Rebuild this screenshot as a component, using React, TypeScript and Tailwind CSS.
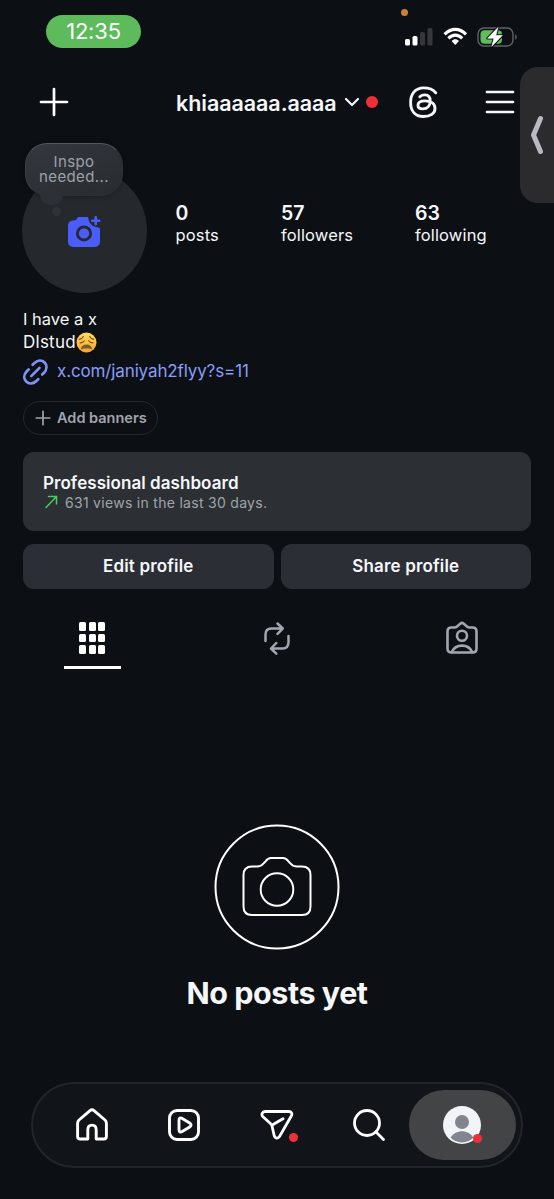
import { ReactNode } from "react";

interface StatProps {
  value: string;
  label: string;
  className?: string;
}

const Stat = (props: StatProps) => {
  return (
    <div className={props.className}>
      <div className="text-[19.5px] leading-[22px] font-semibold">{props.value}</div>
      <div className="text-[16.5px] leading-[22px] tracking-[0.15px]">{props.label}</div>
    </div>
  );
};

const ThreadsIcon = () => (
  <svg width="34" height="36" viewBox="0 0 34 36" fill="none" stroke="#f5f7fa" strokeWidth="2.9" strokeLinecap="round" strokeLinejoin="round">
    <path d="M29.8 8.8C27 5.3 22.5 3.9 17.6 3.9C9.4 3.9 4.6 9.8 4.6 18.3C4.6 27.2 9.4 32.5 17.3 32.5C24.6 32.5 29 29.3 29 24.5C29 19.4 24.3 16.9 19 16.9C14.4 16.9 12 18.7 12 21.2C12 23.4 13.9 24.9 16.7 24.9C21.3 24.9 24.2 21.7 24.2 17C24.2 13 22.3 10.9 18.9 10.9C16.7 10.9 15 11.6 13.8 12.8" />
  </svg>
);

const StatusIcons = () => (
  <svg width="114" height="24" viewBox="0 0 114 24" fill="none">
    <rect x="1" y="14" width="5" height="6.5" rx="1.6" fill="#fff" />
    <rect x="8.5" y="11" width="5" height="9.5" rx="1.6" fill="#fff" />
    <rect x="16" y="7" width="5" height="13.5" rx="1.6" fill="#34363b" />
    <rect x="23.5" y="3" width="5" height="17.5" rx="1.6" fill="#34363b" />
    <g stroke="#fff" strokeWidth="3.1">
      <path d="M40.6 9.4C47.2 2.7 55.4 2.7 62 9.4" />
      <path d="M44.4 13.3C48.6 9.1 54 9.1 58.2 13.3" />
    </g>
    <path d="M47.6 15.9C49.9 13.8 52.7 13.8 55 15.9L51.3 20Z" fill="#fff" />
    <rect x="74" y="3" width="35" height="18" rx="6" stroke="#5f6267" strokeWidth="1.4" />
    <path d="M111.2 9.3C113.2 10 113.2 14 111.2 14.7Z" fill="#5f6267" />
    <rect x="76.5" y="5.3" width="21.5" height="13.4" rx="4" fill="#5dbe5b" />
    <path d="M94 2.5L83.6 13.3H90L87.8 21.3L98.2 10.5H91.8Z" fill="#fff" stroke="#0c1014" strokeWidth="2.6" strokeLinejoin="round" />
    <path d="M94 2.5L83.6 13.3H90L87.8 21.3L98.2 10.5H91.8Z" fill="#fff" stroke="#fff" strokeWidth="0.6" strokeLinejoin="round" />
  </svg>
);

const WearyFace = () => (
  <svg width="21" height="21" viewBox="0 0 21 21" role="img" aria-label="weary face">
    <defs>
      <linearGradient id="face" x1="0" y1="0" x2="0" y2="1">
        <stop offset="0" stopColor="#ffdc62" />
        <stop offset="1" stopColor="#f3a52f" />
      </linearGradient>
    </defs>
    <circle cx="10.5" cy="10.5" r="10" fill="url(#face)" />
    <g fill="none" stroke="#7a4a12" strokeWidth="1.1" strokeLinecap="round">
      <path d="M3.3 7.4C5.2 7 6.6 5.9 7.3 4.4" />
      <path d="M17.7 7.4C15.8 7 14.4 5.9 13.7 4.4" />
      <path d="M4 10.8C5.8 11 7.3 10.3 8.3 8.8" />
      <path d="M17 10.8C15.2 11 13.7 10.3 12.7 8.8" />
    </g>
    <path d="M4.8 17.4C5.2 13.9 7.4 12.4 10.5 12.4S15.8 13.9 16.2 17.4C14.5 16.2 6.5 16.2 4.8 17.4Z" fill="#7d5a30" />
  </svg>
);

const CameraPlus = () => (
  <svg width="33" height="32" viewBox="0 0 33 32">
    <path
      fill="#4a5df9"
      fillRule="evenodd"
      d="M11.5 1H19.2C19.8 1 20.2 1.4 20.3 2C20.8 7.3 24.6 11 30.3 11.4C31.5 11.5 32 12 32 13V25.6C32 29 30 31 26.6 31H5.4C2 31 0 29 0 25.6V10C0 6.6 2 4.7 5.4 4.6C7.5 4.5 8.2 4 9 2.5C9.6 1.4 10.2 1 11.5 1ZM16 9.4A8 8 0 1 0 16 25.4A8 8 0 1 0 16 9.4Z"
    />
    <circle cx="16" cy="17.4" r="5.2" fill="#4a5df9" />
    <path d="M27.7 1.2V8.2M24.2 4.7H31.2" stroke="#4a5df9" strokeWidth="2.6" strokeLinecap="round" />
  </svg>
);

const NavItem = ({ children }: { children: ReactNode }) => (
  <div className="relative flex w-[92.5px] items-center justify-center">{children}</div>
);

const App = () => {
  return (
    <div className="relative flex h-[1199px] w-[554px] flex-col overflow-hidden bg-[#0c1014] font-['Inter',sans-serif] text-[#f5f7fa]">
      {/* status bar */}
      <div className="flex h-16 justify-between pt-[15px] pr-[36px] pl-[46px]">
        <div className="flex h-[33px] w-[95px] items-center justify-center rounded-full bg-[#5dbb5b] text-[22px] tracking-[-0.2px] text-white">
          12:35
        </div>
        <div className="pt-[10px]">
          <StatusIcons />
        </div>
      </div>
      <div className="absolute top-[9px] left-[401px] size-[7px] rounded-full bg-[#c98038]" />

      {/* header */}
      <div className="flex h-[76px] items-center pl-[39px]">
        <svg width="30" height="30" viewBox="0 0 30 30" stroke="#fff" strokeWidth="2.7" strokeLinecap="round">
          <path d="M15 2V28M2 15H28" />
        </svg>
        <div className="ml-[107px] w-[162px] pt-[2px] text-[21.5px] font-semibold tracking-[-0.05px] whitespace-nowrap">khiaaaaaa.aaaa</div>
        <svg className="ml-[6px]" width="16" height="10" viewBox="0 0 16 10" fill="none" stroke="#f5f7fa" strokeWidth="2.2" strokeLinecap="round" strokeLinejoin="round">
          <path d="M2 2L8 8L14 2" />
        </svg>
        <div className="ml-[6px] size-3 rounded-full bg-[#f03038]" />
        <div className="ml-[28px]">
          <ThreadsIcon />
        </div>
        <svg className="ml-[45px]" width="30" height="26" viewBox="0 0 30 26" stroke="#f5f7fa" strokeWidth="2.7" strokeLinecap="round">
          <path d="M2 3H28M2 13H28M2 23H28" />
        </svg>
      </div>

      {/* side handle */}
      <div className="absolute top-[67px] left-[520px] flex h-[136px] w-[40px] items-center rounded-l-[18px] bg-[#2b2b2d] pl-[9px]">
        <svg width="16" height="40" viewBox="0 0 16 40" fill="none" stroke="#b8b9c1" strokeWidth="5" strokeLinecap="round" strokeLinejoin="round">
          <path d="M11.5 3.5L4.5 20L11.5 36.5" />
        </svg>
      </div>

      {/* avatar and stats */}
      <div className="flex h-[154px] pt-[28px] pl-[22px]">
        <div className="relative flex size-[125px] items-center justify-center rounded-full bg-[#25282c]">
          <div className="pt-[2px]">
            <CameraPlus />
          </div>
          <div className="absolute top-[39px] left-[30px] size-[9px] rounded-full bg-[#2f3237]" />
          <div className="absolute top-[-25px] left-[3px] flex h-[53px] w-[98px] flex-col items-center justify-center rounded-[22px] border border-[#2c3036] border-t-[#55595e] border-l-[#3c4045] bg-linear-to-br from-[#34373d] to-[#282c31] pb-px text-[15px] leading-[15px] tracking-[0.4px] text-[#9da1a9] shadow-[0_1px_5px_rgba(0,0,0,0.25)]">
            <span>Inspo</span>
            <span>needed...</span>
          </div>
          {/* bubble tail */}
          <div className="absolute top-[27px] left-[18px] h-[10px] w-[23px] rounded-b-[11px] bg-[#2d3036]" />
        </div>
        <div className="flex pt-[34px] pl-[28.5px]">
          <Stat value="0" label="posts" className="w-[105.5px]" />
          <Stat value="57" label="followers" className="w-[134px]" />
          <Stat value="63" label="following" />
        </div>
      </div>

      {/* bio */}
      <div className="flex h-[158px] flex-col px-[23px] pt-[14px]">
        <div className="text-[16.5px] leading-[22px]">I have a x</div>
        <div className="flex h-[24px] items-center text-[17px] tracking-[0.25px]">
          <span className="pt-px">Dlstud</span>
          <WearyFace />
        </div>
        <div className="mt-[5px] flex h-[26px] items-center gap-[9px] text-[17px] tracking-[-0.13px] text-[#8a9dfa]">
          <svg width="25" height="26" viewBox="0 0 25 26" fill="none" stroke="#7f93f7" strokeWidth="2.7" strokeLinecap="round">
            <path d="M8.3 17.1L16.5 8.9" />
            <path d="M9.6 5.8L11.5 3.9C15 .9 19 .9 21.6 3.5S24.2 10.3 21 13.7L19.2 15.5" />
            <path d="M15.2 20.2L13.3 22.1C9.8 25.1 5.8 25.1 3.2 22.5S.6 15.7 3.8 12.3L5.6 10.5" />
          </svg>
          <span className="whitespace-nowrap">x.com/janiyah2flyy?s=11</span>
        </div>
        <div className="mt-[16px] flex h-[34px] w-[135px] shrink-0 items-center gap-[6px] rounded-full border border-[#25282d] pl-[11px] text-[14.5px] font-semibold whitespace-nowrap text-[#a0a4ac]">
          <svg className="shrink-0" width="16" height="16" viewBox="0 0 16 16" stroke="#a0a4ac" strokeWidth="1.7" strokeLinecap="round">
            <path d="M8 1.3V14.7M1.3 8H14.7" />
          </svg>
          Add banners
        </div>
      </div>

      {/* dashboard + buttons */}
      <div className="flex flex-col gap-[13px] px-[23px]">
        <div className="h-[79px] rounded-[11px] bg-[#2c2f33] pt-[21px] pl-[20px]">
          <div className="text-[17px] leading-[21px] font-semibold tracking-[0.06px]">Professional dashboard</div>
          <div className="flex h-4 items-center gap-[7px] text-[14px] tracking-[0.29px] text-[#a0a4ac]">
            <svg width="15" height="14" viewBox="0 0 15 14" fill="none" stroke="#50c864" strokeWidth="1.5" strokeLinecap="round">
              <path d="M3 12.5L13.5 1.5M5.5 1.5H13.5V9" />
            </svg>
            631 views in the last 30 days.
          </div>
        </div>
        <div className="flex gap-[7px] text-[17px] font-semibold tracking-[0.15px]">
          <div className="flex h-[45px] flex-1 items-center justify-center rounded-[11px] bg-[#2b2e35] pt-px">Edit profile</div>
          <div className="flex h-[45px] flex-1 items-center justify-center rounded-[11px] bg-[#2b2e35] pt-px">Share profile</div>
        </div>
      </div>

      {/* tabs */}
      <div className="flex h-[80px] pt-[32px]">
        <div className="flex w-[184.5px] flex-col items-center">
          <div className="grid h-[34px] grid-cols-3 content-center gap-x-[2.5px] gap-y-[3px]">
            {Array.from({ length: 9 }).map((_, i) => (
              <div key={i} className="h-[8.5px] w-[7px] rounded-[1.5px] bg-white" />
            ))}
          </div>
          <div className="mt-[11px] h-[3px] w-[57px] bg-white" />
        </div>
        <div className="flex w-[184.5px] justify-center">
          <svg width="34" height="36" viewBox="0 0 34 36" fill="none" stroke="#a2a6b0" strokeWidth="2.5" strokeLinecap="round" strokeLinejoin="round">
            <path d="M5.5 20V13.5C5.5 9.5 7.5 7.5 11.5 7.5H22.5M17.5 2.5L22.8 7.5L17.5 12.8" />
            <path d="M28.5 15V21C28.5 25.5 26.5 27.5 22.5 27.5H11.3M16.3 22L11 27.5L16.3 32.7" />
          </svg>
        </div>
        <div className="flex w-[185px] justify-center">
          <svg width="34" height="36" viewBox="0 0 34 36" fill="none" stroke="#a2a6b0" strokeWidth="2.6" strokeLinecap="round" strokeLinejoin="round">
            <path d="M6.5 6.5H9.8C11.3 6.5 11.9 6 12.8 4.9L15.2 2.7C16.4 1.7 17.6 1.7 18.8 2.7L21.2 4.9C22.1 6 22.7 6.5 24.2 6.5H27.5C30.3 6.5 31.5 8 31.5 10.5V27.5C31.5 30.2 30 31.5 27.5 31.5H6.5C4 31.5 2.5 30.2 2.5 27.5V10.5C2.5 8 4 6.5 6.5 6.5Z" />
            <circle cx="17" cy="14.8" r="5" />
            <path d="M6.8 31C10.5 22.5 23.5 22.5 27.2 31" />
          </svg>
        </div>
      </div>

      {/* empty state */}
      <div className="flex h-[413px] flex-col items-center pt-[155px]">
        <svg width="126" height="126" viewBox="0 0 126 126" fill="none" stroke="#fff" strokeWidth="2">
          <circle cx="63" cy="63" r="61.5" />
          <path d="M38 42.5H43C46 42.5 48 41.5 50 39L51.5 37.3C53 35.3 54.5 34 57 34H69C71.5 34 73 35.3 74.5 37.3L76 39C78 41.5 80 42.5 83 42.5H88C93.5 42.5 96.5 45.5 96.5 51V82.5C96.5 88 93.5 91 88 91H38C32.5 91 29.5 88 29.5 82.5V51C29.5 45.5 32.5 42.5 38 42.5Z" />
          <circle cx="63" cy="65.5" r="16.3" />
        </svg>
        <div className="mt-[23px] text-[30.5px] leading-[40px] font-bold tracking-[-0.45px]">No posts yet</div>
      </div>

      {/* bottom nav */}
      <div className="relative ml-[31px] flex h-[86px] w-[492px] items-stretch rounded-full border-2 border-[#22262c] bg-[#111418] pl-[12.5px]">
        <NavItem>
          <svg width="34" height="34" viewBox="0 0 34 34" fill="none" stroke="#fff" strokeWidth="2.9" strokeLinecap="round" strokeLinejoin="round">
            <path d="M12.8 31H5.2C3.3 31 2.6 30.3 2.6 28.4V15.2C2.6 13.8 3 13 4 12L14.7 2.8C16.2 1.5 17.8 1.5 19.3 2.8L30 12C31 13 31.4 13.8 31.4 15.2V28.4C31.4 30.3 30.7 31 28.8 31H21.2V22C21.2 18.8 19.6 17.1 17 17.1S12.8 18.8 12.8 22Z" />
          </svg>
        </NavItem>
        <NavItem>
          <svg width="34" height="34" viewBox="0 0 34 34" fill="none" stroke="#fff" strokeWidth="2.9" strokeLinejoin="round">
            <rect x="2.5" y="2.5" width="29" height="29" rx="7.5" />
            <path d="M12 12.2V21.8C12 24 13.4 24.7 15.2 23.6L22.7 18.9C24.5 17.8 24.5 16.2 22.7 15.1L15.2 10.4C13.4 9.3 12 10 12 12.2Z" />
          </svg>
        </NavItem>
        <NavItem>
          <svg width="34" height="34" viewBox="0 0 34 34" fill="none" stroke="#fff" strokeWidth="2.8" strokeLinecap="round" strokeLinejoin="round">
            <path d="M5.3 3.5H28.8C31.5 3.5 32.7 5.6 31.3 8L19.6 28.4C18.1 31 14.9 30.7 14.2 27.5L12 18C11.7 16.9 11.2 16.2 10.4 15.5L3 8.8C.8 6.6 2.3 3.5 5.3 3.5ZM12.2 17L23 10.8" />
          </svg>
          <div className="absolute top-[48.5px] left-[58px] size-[9px] rounded-full bg-[#ed3038]" />
        </NavItem>
        <NavItem>
          <svg width="34" height="34" viewBox="0 0 34 34" fill="none" stroke="#fff" strokeWidth="2.8" strokeLinecap="round">
            <circle cx="15" cy="15" r="12.5" />
            <path d="M24 24L31.5 31.5" />
          </svg>
        </NavItem>
        <div className="relative my-[6px] ml-[-7px] flex w-[107px] shrink-0 items-center justify-center rounded-full bg-[#424446]">
          <svg width="38" height="38" viewBox="0 0 38 38">
            <circle cx="19" cy="19" r="19" fill="#f2f5f8" />
            <circle cx="19" cy="16" r="7" fill="#82858f" />
            <path d="M7.5 31.5C13 23 25 23 30.5 31.5C24 38 14 38 7.5 31.5Z" fill="#82858f" />
          </svg>
          <div className="absolute top-[44px] left-[64.5px] size-[9px] rounded-full bg-[#ed3038]" />
        </div>
      </div>
    </div>
  );
};

export default App;
